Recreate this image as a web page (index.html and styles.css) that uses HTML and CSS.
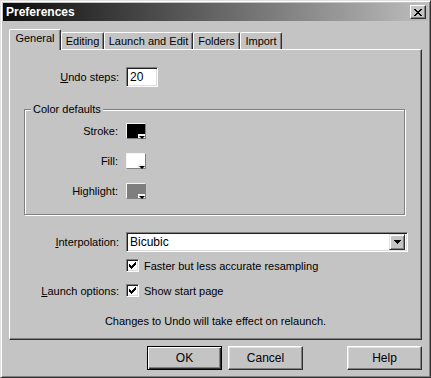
FILE: index.html
```html
<html>
<head>
	<title>Preferences</title>
	<link rel="stylesheet" href="styles.css">
</head>
<body>
	<div class="window">
		<div class="titlebar">
			<span class="title">Preferences</span>
			<span class="close"><svg width="8" height="7" viewBox="0 0 8 7" shape-rendering="crispEdges"><path d="M0 0h2v1h-2zM6 0h2v1h-2zM1 1h2v1h-2zM5 1h2v1h-2zM2 2h4v1h-4zM3 3h2v1h-2zM2 4h4v1h-4zM1 5h2v1h-2zM5 5h2v1h-2zM0 6h2v1h-2zM6 6h2v1h-2z" fill="#000"/></svg></span>
		</div>
		<div class="tabs">
			<span class="tab active" style="width:52px">General</span>
			<span class="tab" style="width:43px">Editing</span>
			<span class="tab" style="width:89px">Launch and Edit</span>
			<span class="tab" style="width:47px">Folders</span>
			<span class="tab" style="width:42px">Import</span>
		</div>
		<div class="panel">
			<div class="row undoRow">
				<span class="lbl"><u>U</u>ndo steps:</span>
				<span class="field numField">20</span>
			</div>
			<fieldset class="group">
				<legend>Color defaults</legend>
				<div class="row swatchRow first">
					<span class="lbl">Stroke:</span>
					<span class="swatch" style="background:#000"></span>
				</div>
				<div class="row swatchRow">
					<span class="lbl">Fill:</span>
					<span class="swatch" style="background:#fff"></span>
				</div>
				<div class="row swatchRow">
					<span class="lbl">Highlight:</span>
					<span class="swatch" style="background:#7e7e7e"></span>
				</div>
			</fieldset>
			<div class="row interpRow">
				<span class="lbl"><u>I</u>nterpolation:</span>
				<span class="field selectField">
					<span class="selText">Bicubic</span>
					<span class="dropBtn"><svg width="7" height="4" viewBox="0 0 7 4" shape-rendering="crispEdges"><path d="M0 0h7v1h-7zM1 1h5v1h-5zM2 2h3v1h-3zM3 3h1v1h-1z" fill="#000"/></svg></span>
				</span>
			</div>
			<div class="row checkRow first">
				<span class="lbl"></span>
				<span class="check"><svg width="9" height="9" viewBox="0 0 9 9" shape-rendering="crispEdges"><path d="M1 3h1v3h-1zM2 4h1v3h-1zM3 5h1v3h-1zM4 4h1v3h-1zM5 3h1v3h-1zM6 2h1v3h-1zM7 1h1v3h-1z" fill="#000"/></svg></span>
				<span>Faster but less accurate resampling</span>
			</div>
			<div class="row checkRow">
				<span class="lbl"><u>L</u>aunch options:</span>
				<span class="check"><svg width="9" height="9" viewBox="0 0 9 9" shape-rendering="crispEdges"><path d="M1 3h1v3h-1zM2 4h1v3h-1zM3 5h1v3h-1zM4 4h1v3h-1zM5 3h1v3h-1zM6 2h1v3h-1zM7 1h1v3h-1z" fill="#000"/></svg></span>
				<span>Show start page</span>
			</div>
			<p class="note">Changes to Undo will take effect on relaunch.</p>
		</div>
		<div class="buttons">
			<button class="default">OK</button>
			<button>Cancel</button>
			<button class="help">Help</button>
		</div>
	</div>
</body>
</html>
```

FILE: styles.css
```css
	body {
		margin: 0;
		background-color: #c4c4c4;
		color: #000;
		font-family: "Liberation Sans", Arial, sans-serif;
		font-size: 11px;
	}

	.window {
		box-sizing: border-box;
		width: 431px;
		height: 378px;
		padding: 1px;
		background-color: #c4c4c4;
		border: 1px solid;
		border-color: #e0e0e0 #303030 #303030 #e0e0e0;
		box-shadow: inset 1px 1px 0 #fff, inset -1px -1px 0 #808080;
		display: flex;
		flex-direction: column;
	}

	.titlebar {
		margin: 1px;
		height: 18px;
		display: flex;
		align-items: center;
		background: linear-gradient(to right, #0c0c0c, #bdbdbd);
		padding-left: 3px;
	}

	.title {
		color: #fff;
		font-weight: bold;
		font-size: 12px;
		flex: 1;
	}

	.close {
		box-sizing: border-box;
		width: 16px;
		height: 14px;
		margin-right: 2px;
		display: flex;
		align-items: center;
		justify-content: center;
		background-color: #c4c4c4;
		border: 1px solid;
		border-color: #fff #303030 #303030 #fff;
		box-shadow: inset -1px -1px 0 #808080;
	}

	.tabs {
		display: flex;
		align-items: flex-end;
		height: 20px;
		margin: 7px 0 0 7px;
	}

	.tab {
		box-sizing: border-box;
		height: 17px;
		display: flex;
		align-items: center;
		justify-content: center;
		border-top: 1px solid #fff;
		border-left: 1px solid #fff;
		border-right: 1px solid #303030;
		border-radius: 2px 2px 0 0;
		box-shadow: inset -1px 0 0 #808080;
		padding-bottom: 1px;
	}

	.tab.active {
		height: 21px;
		margin-bottom: -1px;
		position: relative;
		z-index: 1;
		background-color: #c4c4c4;
		padding-bottom: 5px;
	}

	.panel {
		box-sizing: border-box;
		width: 413px;
		height: 291px;
		margin-left: 7px;
		border: 1px solid;
		border-color: #fff #303030 #303030 #fff;
		box-shadow: inset -1px -1px 0 #808080;
	}

	.row {
		display: flex;
		align-items: center;
	}

	.lbl {
		width: 109px;
		margin-right: 7px;
		text-align: right;
	}

	.field {
		box-sizing: border-box;
		height: 20px;
		background-color: #fff;
		border: 1px solid;
		border-color: #808080 #fff #fff #808080;
		box-shadow: inset 1px 1px 0 #202020, inset -1px -1px 0 #dcdcdc;
		display: flex;
		align-items: center;
	}

	.undoRow {
		margin-top: 17px;
	}

	.numField {
		width: 32px;
		padding-left: 3px;
		font-size: 12px;
	}

	.group {
		box-sizing: border-box;
		width: 381px;
		margin: 16px 0 0 14px;
		padding: 0 0 15px 0;
		border: 1px solid #808080;
		box-shadow: 1px 1px 0 #fff, inset 1px 1px 0 #fff;
	}

	.group legend {
		margin-left: 6px;
		padding: 0 2px;
		line-height: 13px;
		background-color: #c4c4c4;
	}

	.group .lbl {
		width: 93px;
		margin-right: 8px;
	}

	.swatchRow {
		margin-top: 14px;
	}

	.swatchRow.first {
		margin-top: 7px;
	}

	.swatch {
		box-sizing: border-box;
		width: 20px;
		height: 16px;
		position: relative;
		border: 1px solid;
		border-color: #f4f4f4 #808080 #808080 #f4f4f4;
	}

	.swatch::before {
		content: "";
		position: absolute;
		right: 0;
		bottom: 0;
		width: 7px;
		height: 4px;
		background-color: #f4f4f4;
	}

	.swatch::after {
		content: "";
		position: absolute;
		right: 0;
		bottom: -1px;
		border-top: 3px solid #000;
		border-left: 3px solid transparent;
		border-right: 3px solid transparent;
	}

	.interpRow {
		margin-top: 17px;
	}

	.selectField {
		width: 282px;
		padding: 0 2px 0 3px;
		font-size: 12px;
	}

	.selText {
		flex: 1;
	}

	.dropBtn {
		box-sizing: border-box;
		width: 16px;
		height: 16px;
		display: flex;
		align-items: center;
		justify-content: center;
		background-color: #c4c4c4;
		border: 1px solid;
		border-color: #e0e0e0 #303030 #303030 #e0e0e0;
		box-shadow: inset 1px 1px 0 #fff, inset -1px -1px 0 #808080;
	}

	.checkRow {
		margin-top: 12px;
		height: 13px;
	}

	.checkRow.first {
		margin-top: 7px;
	}

	.check {
		box-sizing: border-box;
		width: 13px;
		height: 13px;
		margin-right: 5px;
		display: flex;
		align-items: center;
		justify-content: center;
		background-color: #fff;
		border: 1px solid;
		border-color: #808080 #fff #fff #808080;
		box-shadow: inset 1px 1px 0 #202020, inset -1px -1px 0 #dcdcdc;
	}

	.note {
		margin: 18px 0 0 0;
		line-height: 13px;
		text-align: center;
	}

	.buttons {
		display: flex;
		justify-content: flex-end;
		margin-top: 6px;
		padding-right: 7px;
		gap: 6px;
	}

	button {
		box-sizing: border-box;
		width: 75px;
		height: 24px;
		font-family: "Liberation Sans", Arial, sans-serif;
		font-size: 12px;
		color: #000;
		background-color: #c4c4c4;
		border: 1px solid;
		border-color: #fff #303030 #303030 #fff;
		box-shadow: inset -1px -1px 0 #808080, inset 1px 1px 0 #e0e0e0;
		padding: 0;
	}

	button.default {
		border: 1px solid #000;
		box-shadow: inset 1px 1px 0 #fff, inset -1px -1px 0 #303030, inset -2px -2px 0 #808080;
	}

	button.help {
		margin-left: 38px;
	}
```
